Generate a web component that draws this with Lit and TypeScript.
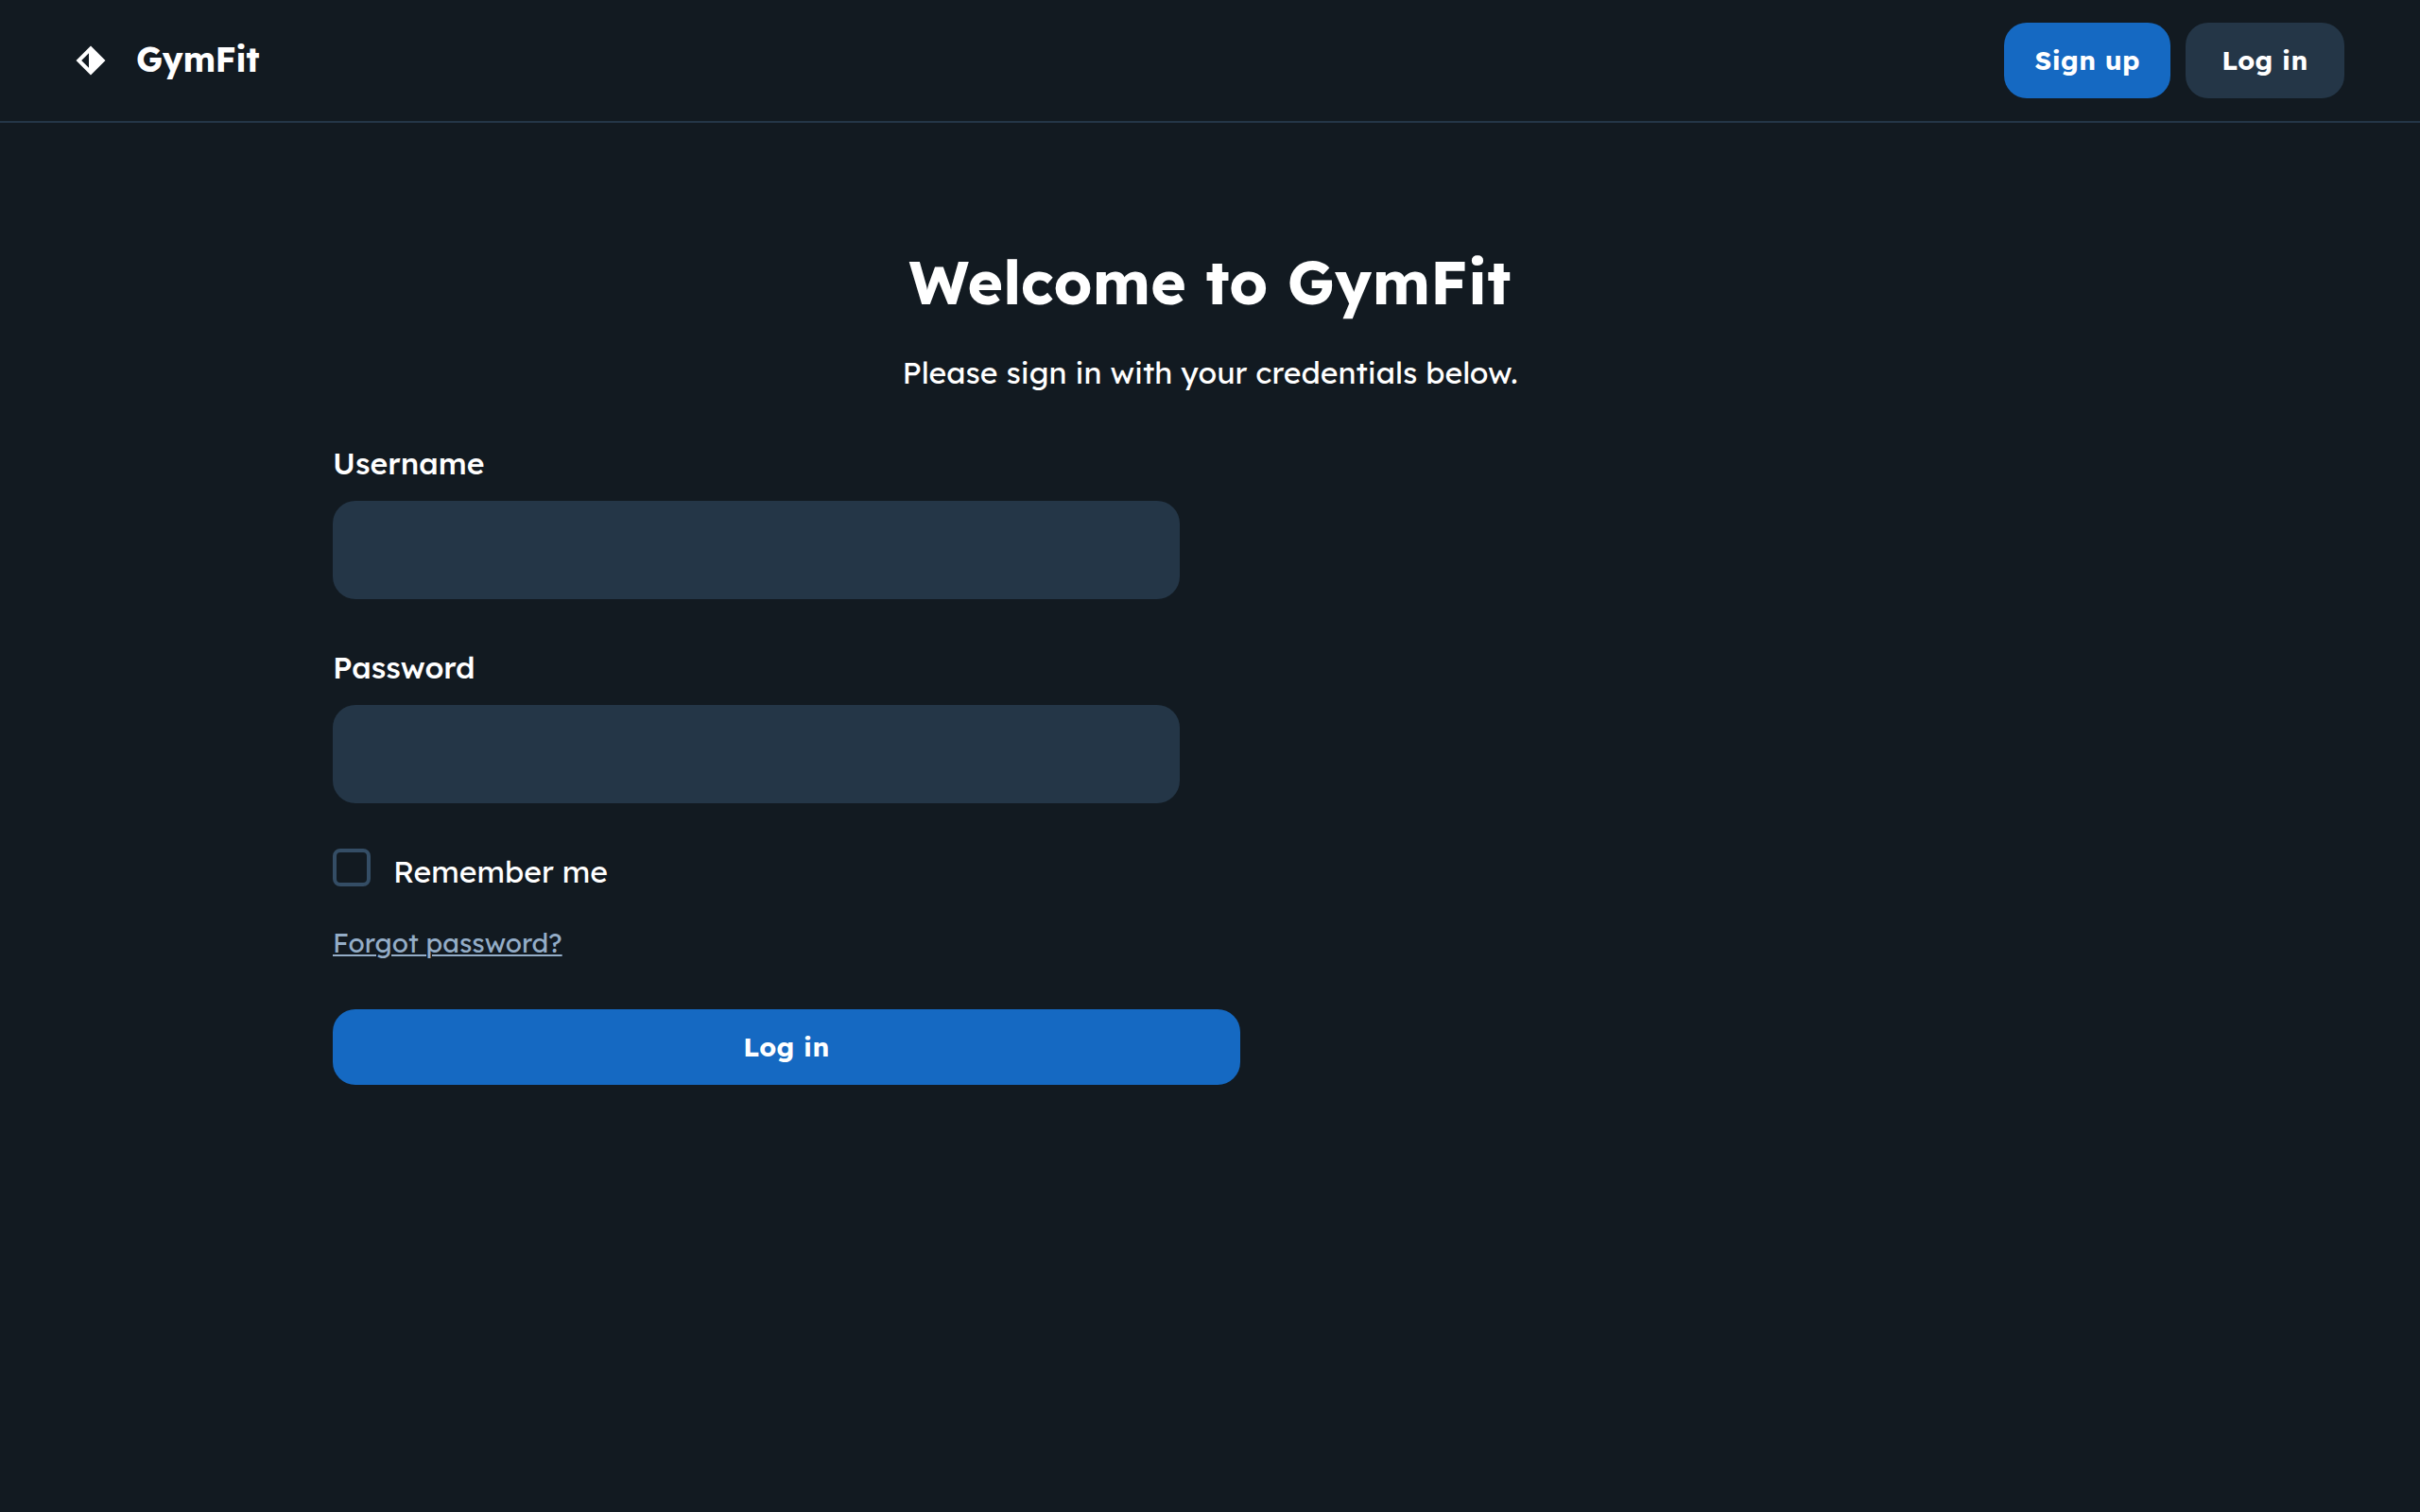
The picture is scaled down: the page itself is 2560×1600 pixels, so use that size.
import { LitElement, html, css } from "lit";
import { customElement, property } from "lit/decorators.js";

@customElement("gf-header")
class GfHeader extends LitElement {
  static styles = css`
    :host {
      display: flex;
      align-items: center;
      justify-content: space-between;
      box-sizing: border-box;
      height: 130px;
      padding: 0 80px;
      border-bottom: 2px solid #243647;
    }
    .brand {
      display: flex;
      align-items: center;
      gap: 32px;
    }
    .logo {
      display: block;
      width: 32px;
      height: 32px;
    }
    .name {
      margin: 0;
      padding-bottom: 3px;
      font-size: 36px;
      font-weight: 700;
      line-height: 45px;
      letter-spacing: -0.015em;
    }
    .actions {
      display: flex;
      gap: 16px;
    }
    .btn {
      box-sizing: border-box;
      min-width: 168px;
      height: 80px;
      padding: 0 32px 1px;
      border: 0;
      border-radius: 24px;
      background: #243647;
      color: #fff;
      font: 700 28px/42px Lexend, "Open Sans", sans-serif;
      letter-spacing: 0.015em;
    }
    .primary {
      background: #1569c2;
    }
  `;

  render() {
    return html`
      <div class="brand">
        <svg class="logo" viewBox="0 0 48 48" fill="none">
          <path
            fill="currentColor"
            fill-rule="evenodd"
            clip-rule="evenodd"
            d="M24 0.757355L47.2426 24L24 47.2426L0.757355 24L24 0.757355ZM21 35.7574V12.2426L9.24264 24L21 35.7574Z"
          />
        </svg>
        <h2 class="name">GymFit</h2>
      </div>
      <div class="actions">
        <button class="btn primary">Sign up</button>
        <button class="btn">Log in</button>
      </div>
    `;
  }
}

@customElement("gf-field")
class GfField extends LitElement {
  static styles = css`
    :host {
      display: block;
      width: 896px;
    }
    .field {
      display: flex;
      flex-direction: column;
      gap: 16px;
    }
    .label {
      font-size: 32px;
      font-weight: 500;
      line-height: 48px;
    }
    .input {
      box-sizing: border-box;
      width: 100%;
      height: 104px;
      padding: 32px;
      border: 0;
      border-radius: 24px;
      outline: 0;
      background: #243647;
      color: #fff;
      font: 400 32px/40px Lexend, "Open Sans", sans-serif;
    }
  `;

  @property() label = "";
  @property() type = "text";

  render() {
    return html`
      <label class="field">
        <span class="label">${this.label}</span>
        <input class="input" type=${this.type} />
      </label>
    `;
  }
}

@customElement("app-root")
class AppRoot extends LitElement {
  static styles = css`
    :host {
      display: flex;
      flex-direction: column;
      min-height: 1600px;
      background: #121a21;
      color: #fff;
      font-family: Lexend, "Open Sans", sans-serif;
    }
    .main {
      box-sizing: border-box;
      width: 1920px;
      margin: 0 auto;
      padding: 128px 32px 0;
    }
    .title {
      margin: 0;
      font-size: 64px;
      font-weight: 700;
      line-height: 80px;
      text-align: center;
    }
    .lead {
      margin: 32px 0 48px;
      font-size: 32px;
      line-height: 48px;
      text-align: center;
    }
    .form {
      display: flex;
      flex-direction: column;
      align-items: flex-start;
    }
    .fields {
      display: flex;
      flex-direction: column;
      gap: 48px;
    }
    .remember {
      display: flex;
      align-items: flex-start;
      gap: 24px;
      margin-top: 48px;
      font-size: 32px;
      line-height: 48px;
    }
    .check {
      appearance: none;
      box-sizing: border-box;
      width: 40px;
      height: 40px;
      margin: 0;
      border: 4px solid #344d65;
      border-radius: 8px;
      background: transparent;
    }
    .forgot {
      margin-top: 30px;
      color: #94adc7;
      font-size: 28px;
      line-height: 43px;
      text-decoration: underline;
      text-decoration-thickness: 2px;
      text-underline-offset: 2px;
    }
    .submit {
      width: 960px;
      height: 80px;
      margin-top: 49px;
      padding: 0 40px 1px;
      border: 0;
      border-radius: 24px;
      background: #1569c2;
      color: #fff;
      font: 700 28px/42px Lexend, "Open Sans", sans-serif;
      letter-spacing: 0.015em;
    }
  `;

  render() {
    return html`
      <gf-header></gf-header>
      <main class="main">
        <h1 class="title">Welcome to GymFit</h1>
        <p class="lead">Please sign in with your credentials below.</p>
        <div class="form">
          <div class="fields">
            <gf-field label="Username"></gf-field>
            <gf-field label="Password" type="password"></gf-field>
          </div>
          <label class="remember">
            <input class="check" type="checkbox" />
            <span>Remember me</span>
          </label>
          <a class="forgot">Forgot password?</a>
          <button class="submit">Log in</button>
        </div>
      </main>
    `;
  }
}
